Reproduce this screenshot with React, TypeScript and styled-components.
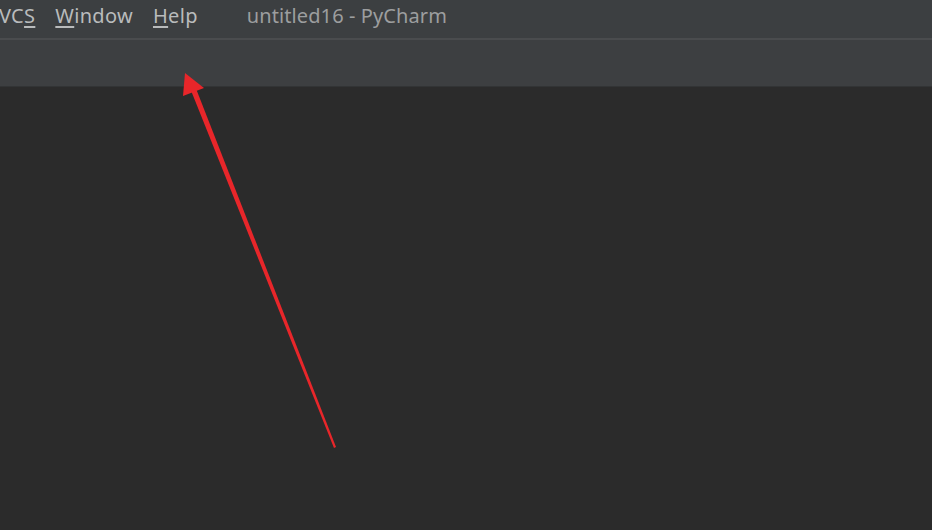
import React from "react";
import styled, { createGlobalStyle } from "styled-components";

const Global = createGlobalStyle`
  html, body { margin: 0; padding: 0; background: #2b2b2b; overflow: hidden; }
  #root { width: 932px; height: 530px; }
`;

const Frame = styled.div`
  position: relative;
  width: 932px;
  height: 530px;
  display: flex;
  flex-direction: column;
  background: #2b2b2b;
  overflow: hidden;
  font-family: "Noto Sans", "Open Sans", sans-serif;
`;

const MenuBar = styled.div`
  height: 38px;
  flex: none;
  display: flex;
  align-items: center;
  background: #3c3f41;
  border-bottom: 2px solid #4a4c4e;
  box-sizing: content-box;
`;

const MenuList = styled.div`
  display: flex;
  align-items: center;
  gap: 20px;
  margin-left: -1px;
`;

const MenuItem = styled.span`
  color: #b9bbbc;
  font-size: 20px;
  letter-spacing: 0.3px;
  line-height: 24px;
  margin-top: -6px;
  u { text-decoration-thickness: 1.5px; text-underline-offset: 3px; }
`;

const Title = styled.span`
  color: #9c9e9f;
  font-size: 20px;
  letter-spacing: 0.1px;
  line-height: 24px;
  margin-top: -6px;
  margin-left: 49px;
`;

const ToolBar = styled.div`
  height: 46px;
  flex: none;
  background: #3d3f41;
  border-bottom: 1px solid #323435;
`;

const Editor = styled.div`
  flex: 1;
  background: #2b2b2b;
`;

const ArrowLayer = styled.svg`
  position: absolute;
  left: 0;
  top: 0;
  pointer-events: none;
`;

export default function App() {
  return (
    <>
      <Global />
      <Frame>
        <MenuBar>
          <MenuList>
            <MenuItem>VC<u>S</u></MenuItem>
            <MenuItem><u>W</u>indow</MenuItem>
            <MenuItem><u>H</u>elp</MenuItem>
          </MenuList>
          <Title>untitled16 - PyCharm</Title>
        </MenuBar>
        <ToolBar />
        <Editor />
        <ArrowLayer width="932" height="530" viewBox="0 0 932 530">
          <polygon points="190,88 195,86 336,447 334,448" fill="#e8262a" />
          <polygon points="185,73 204,88 183,96" fill="#e8262a" />
        </ArrowLayer>
      </Frame>
    </>
  );
}
